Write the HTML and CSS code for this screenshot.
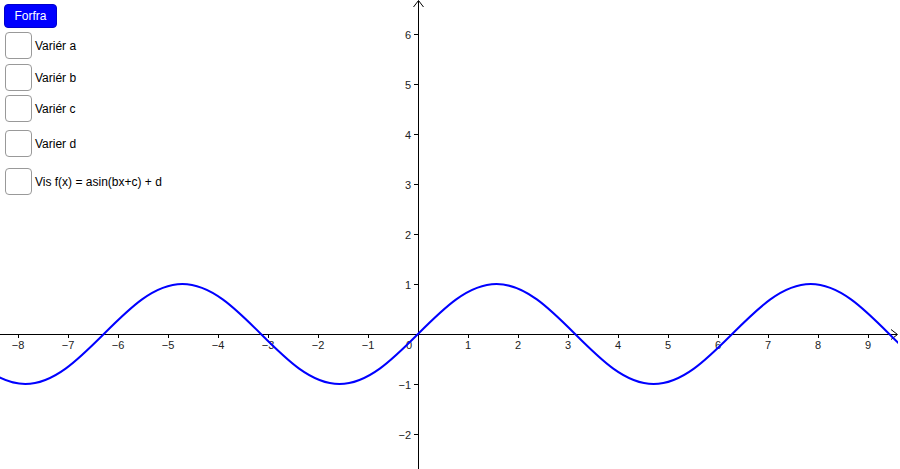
FILE: index.html
```html
<!DOCTYPE html>
<html>
<head>
<meta charset="utf-8">
<link rel="stylesheet" href="styles.css">
</head>
<body>
<div class="app">
  <svg class="graph" width="900" height="469" viewBox="0 0 900 469" xmlns="http://www.w3.org/2000/svg">
    <defs>
      <clipPath id="view"><rect x="0" y="0" width="898" height="469"/></clipPath>
    </defs>
    <g class="axes" stroke="#000" stroke-width="1" fill="none">
      <line x1="0" y1="334.5" x2="897" y2="334.5"/>
      <polyline points="891,329.5 897.5,334.5 891,339.5"/>
      <line x1="418.5" y1="1" x2="418.5" y2="469"/>
      <polyline points="413.5,7 418.5,0.5 423.5,7"/>
      <g class="xticks">
        <line x1="18.5" y1="334" x2="18.5" y2="338"/>
        <line x1="68.5" y1="334" x2="68.5" y2="338"/>
        <line x1="118.5" y1="334" x2="118.5" y2="338"/>
        <line x1="168.5" y1="334" x2="168.5" y2="338"/>
        <line x1="218.5" y1="334" x2="218.5" y2="338"/>
        <line x1="268.5" y1="334" x2="268.5" y2="338"/>
        <line x1="318.5" y1="334" x2="318.5" y2="338"/>
        <line x1="368.5" y1="334" x2="368.5" y2="338"/>
        <line x1="468.5" y1="334" x2="468.5" y2="338"/>
        <line x1="518.5" y1="334" x2="518.5" y2="338"/>
        <line x1="568.5" y1="334" x2="568.5" y2="338"/>
        <line x1="618.5" y1="334" x2="618.5" y2="338"/>
        <line x1="668.5" y1="334" x2="668.5" y2="338"/>
        <line x1="718.5" y1="334" x2="718.5" y2="338"/>
        <line x1="768.5" y1="334" x2="768.5" y2="338"/>
        <line x1="818.5" y1="334" x2="818.5" y2="338"/>
        <line x1="868.5" y1="334" x2="868.5" y2="338"/>
      </g>
      <g class="yticks">
        <line x1="414" y1="34.5" x2="418" y2="34.5"/>
        <line x1="414" y1="84.5" x2="418" y2="84.5"/>
        <line x1="414" y1="134.5" x2="418" y2="134.5"/>
        <line x1="414" y1="184.5" x2="418" y2="184.5"/>
        <line x1="414" y1="234.5" x2="418" y2="234.5"/>
        <line x1="414" y1="284.5" x2="418" y2="284.5"/>
        <line x1="414" y1="384.5" x2="418" y2="384.5"/>
        <line x1="414" y1="434.5" x2="418" y2="434.5"/>
      </g>
    </g>
    <g class="labels xlabels" text-anchor="middle">
      <text x="18" y="349">−8</text>
      <text x="68" y="349">−7</text>
      <text x="118" y="349">−6</text>
      <text x="168" y="349">−5</text>
      <text x="218" y="349">−4</text>
      <text x="268" y="349">−3</text>
      <text x="318" y="349">−2</text>
      <text x="368" y="349">−1</text>
      <text x="409" y="349">0</text>
      <text x="468" y="349">1</text>
      <text x="518" y="349">2</text>
      <text x="568" y="349">3</text>
      <text x="618" y="349">4</text>
      <text x="668" y="349">5</text>
      <text x="718" y="349">6</text>
      <text x="768" y="349">7</text>
      <text x="818" y="349">8</text>
      <text x="868" y="349">9</text>
    </g>
    <g class="labels ylabels" text-anchor="end">
      <text x="411" y="38.5">6</text>
      <text x="411" y="88.5">5</text>
      <text x="411" y="138.5">4</text>
      <text x="411" y="188.5">3</text>
      <text x="411" y="238.5">2</text>
      <text x="411" y="288.5">1</text>
      <text x="411" y="388.5">−1</text>
      <text x="411" y="438.5">−2</text>
    </g>
    <path class="curve" clip-path="url(#view)" fill="none" stroke="#0000ff" stroke-width="2"
      d="M -53.24 334
         c 25.614,25.614 50.116,50 78.540,50
         c 28.424,0 52.926,-24.386 78.540,-50
         c 25.614,-25.614 50.116,-50 78.540,-50
         c 28.424,0 52.926,24.386 78.540,50
         c 25.614,25.614 50.116,50 78.540,50
         c 28.424,0 52.926,-24.386 78.540,-50
         c 25.614,-25.614 50.116,-50 78.540,-50
         c 28.424,0 52.926,24.386 78.540,50
         c 25.614,25.614 50.116,50 78.540,50
         c 28.424,0 52.926,-24.386 78.540,-50
         c 25.614,-25.614 50.116,-50 78.540,-50
         c 28.424,0 52.926,24.386 78.540,50
         c 25.614,25.614 50.116,50 78.540,50"/>
  </svg>

  <div class="controls">
    <button class="reset">Forfra</button>
    <label class="row row-a"><span class="box"></span><span class="txt">Variér a</span></label>
    <label class="row row-b"><span class="box"></span><span class="txt">Variér b</span></label>
    <label class="row row-c"><span class="box"></span><span class="txt">Variér c</span></label>
    <label class="row row-d"><span class="box"></span><span class="txt">Varier d</span></label>
    <label class="row row-e"><span class="box"></span><span class="txt">Vis f(x) = asin(bx+c) + d</span></label>
  </div>
</div>
</body>
</html>
```
FILE: styles.css
```css
html, body {
  margin: 0;
  padding: 0;
  background: #fff;
  overflow: hidden;
}
.app {
  position: relative;
  width: 900px;
  height: 469px;
  font-family: "Liberation Sans", Arial, sans-serif;
}
.graph {
  position: absolute;
  left: 0;
  top: 0;
  display: block;
}
.labels text {
  font-family: "Liberation Sans", Arial, sans-serif;
  font-size: 11px;
  fill: #222;
}
.controls {
  position: absolute;
  left: 0;
  top: 0;
  display: flex;
  flex-direction: column;
  align-items: flex-start;
  padding: 4px 0 0 4px;
}
.reset {
  width: 53px;
  height: 24px;
  margin: 0;
  padding: 0;
  background: #0000ff;
  color: #fff;
  border: 1px solid #0000cc;
  border-radius: 4px;
  font-family: "Liberation Sans", Arial, sans-serif;
  font-size: 12px;
}
.row {
  display: flex;
  align-items: center;
  gap: 3px;
  margin-left: 1px;
  font-size: 12px;
  color: #000;
}
.box {
  display: block;
  width: 27px;
  height: 27px;
  box-sizing: border-box;
  border: 1px solid #999;
  border-radius: 4px;
  background: #fff;
}
.row-a { margin-top: 4px; }
.row-b { margin-top: 5px; }
.row-c { margin-top: 4px; }
.row-d { margin-top: 8px; }
.row-e { margin-top: 11px; }
```
